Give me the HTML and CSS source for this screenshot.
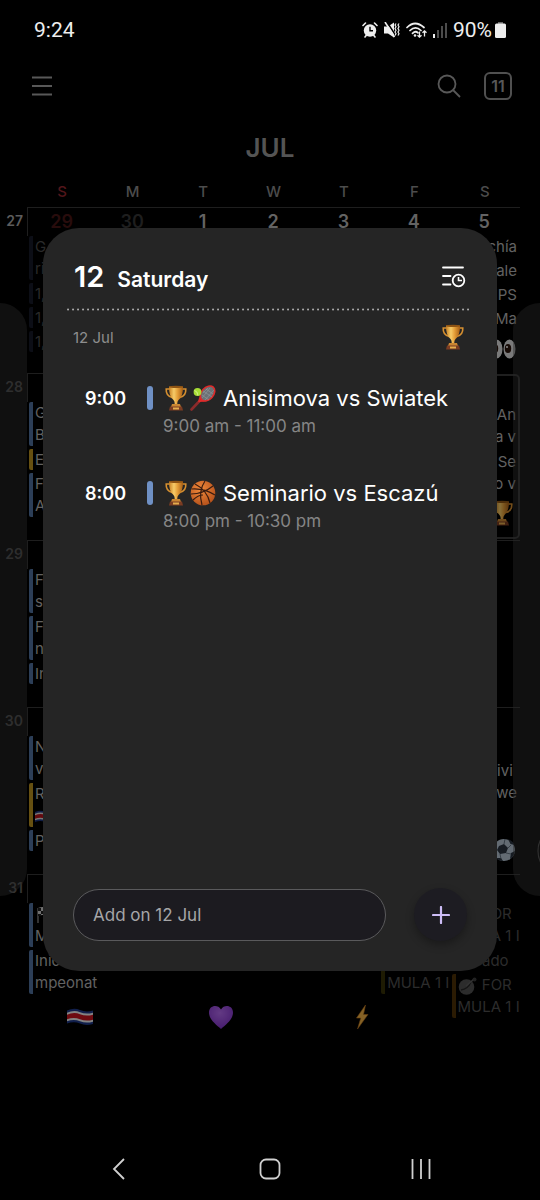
FILE: index.html
```html
<!DOCTYPE html>
<html lang="en">
<head>
<meta charset="utf-8">
<meta name="viewport" content="width=device-width, initial-scale=1">
<title>Calendar</title>
<link rel="stylesheet" href="styles.css">
</head>
<body>
<svg class="defs" aria-hidden="true">
  <defs>
    <linearGradient id="gold" x1="0" y1="0" x2="1" y2="0">
      <stop offset="0" stop-color="#c77f22"/><stop offset=".35" stop-color="#f6cb68"/><stop offset=".6" stop-color="#e5a03a"/><stop offset="1" stop-color="#a85e14"/>
    </linearGradient>
    <radialGradient id="orange" cx=".4" cy=".35" r=".7"><stop offset="0" stop-color="#f08a3c"/><stop offset="1" stop-color="#b4501a"/></radialGradient>
    <radialGradient id="purple" cx=".45" cy=".3" r=".8"><stop offset="0" stop-color="#b46af0"/><stop offset="1" stop-color="#7a2cc4"/></radialGradient>
    <symbol id="trophy" viewBox="0 0 24 26">
      <path d="M6 4H2.200q-.4 7 6 8.500M18 4h3.800q.4 7-6 8.500" fill="none" stroke="#d58f30" stroke-width="1.600"/>
      <path d="M5 1.500h14q.2 10-4.500 13.500-1.300 1-1.300 4.500h-2.400q0-3.500-1.300-4.500Q4.800 11.500 5 1.500z" fill="url(#gold)"/>
      <ellipse cx="12" cy="1.900" rx="7" ry="1.100" fill="#8f5413"/>
      <path d="M8 19h8l1 3H7z" fill="#c98532"/>
      <path d="M6 21.500h12l1 4H5z" fill="#7b3c22"/><path d="M9 22.500h6v2H9z" fill="#e4ac4c"/>
    </symbol>
    <symbol id="racket" viewBox="0 0 26 26">
      <path d="M1.500 24.500 10 15.500" stroke="#8b2b2b" stroke-width="2.600" stroke-linecap="round"/>
      <path d="M9 17q1-4 1.500-5M9.500 16q4 0 6-1" stroke="#dd2a2a" stroke-width="2" fill="none"/>
      <ellipse cx="17.500" cy="8.500" rx="8.500" ry="6" transform="rotate(-48 17.500 8.500)" fill="#6c7175" stroke="#e02b2b" stroke-width="1.600"/>
      <path d="m12 10 7 5M13 6l9 6M16 4l7 5M12 13 20 3M15 15 24 5M13 8l5-5" stroke="#9ba0a4" stroke-width=".5"/>
      <circle cx="7.500" cy="7" r="3.900" fill="#a7dc35"/><path d="M4.500 5.500q3 .5 3.500 5" stroke="#e5f6b0" stroke-width=".7" fill="none"/>
    </symbol>
    <symbol id="basketball" viewBox="0 0 26 26">
      <circle cx="13" cy="13" r="12.300" fill="url(#orange)"/>
      <path d="M1 14Q13 14 23 6M5 4q12 6 15 19M15 1Q8 11 12 25M1.500 9Q14 8 25 15M3 20q5-5 10-5" fill="none" stroke="#3a1c10" stroke-width="1.200"/>
    </symbol>
    <symbol id="eyes" viewBox="0 0 26 24">
      <ellipse cx="6.500" cy="12" rx="6" ry="9.500" fill="#dedede"/><ellipse cx="19.500" cy="12" rx="6" ry="9.500" fill="#dedede"/>
      <ellipse cx="5" cy="11.500" rx="3.200" ry="4.500" fill="#2b150c"/><ellipse cx="18" cy="11.500" rx="3.200" ry="4.500" fill="#2b150c"/>
      <circle cx="17" cy="10" r="1" fill="#fff"/>
    </symbol>
    <symbol id="soccer" viewBox="0 0 26 24">
      <circle cx="14" cy="12" r="11" fill="#b4c3d2"/>
      <path d="m9 8 5-2 4 4-2 5-6 1-3-4zM18 1q5 2 6.500 6l-4-1zM21 15l4-2q-1 6-5 8zM6 20l5 0 2 3q-5-.5-7-3z" fill="#2a3440"/>
      <path d="m14 6 1-5M18 10l3-3M16 15l5 1M10 16l1 5" stroke="#51606e" stroke-width=".8"/>
    </symbol>
    <symbol id="flag" viewBox="0 0 26 18">
      <path d="M0 2.500Q7-.5 13 2t13 .5V16q-7 2-13-.5T0 15.500z" fill="#1f3a8a"/>
      <path d="M0 4.700q7-3 13-.5t13 .5v9q-7 2-13-.5t-13 0z" fill="#eee"/>
      <path d="M0 6.700q7-3 13-.5t13 .5v5q-7 2-13-.5t-13 0z" fill="#c8141f"/>
    </symbol>
    <symbol id="heart" viewBox="0 0 26 26">
      <path d="M13 25C8 20.500 1 15.500 1 8.500 1 1 10 0 13 5.500 16 0 25 1 25 8.500 25 15.500 18 20.500 13 25z" fill="url(#purple)"/>
    </symbol>
    <symbol id="bolt" viewBox="0 0 26 26">
      <path d="M16.500 1 7.500 14h4.300L8.500 25 19 10.500h-4.500z" fill="#f3b345" stroke="#b9701d" stroke-width=".6"/>
    </symbol>
    <symbol id="dish" viewBox="0 0 20 18">
      <circle cx="8.500" cy="10" r="7.800" fill="#b0b0b0"/><path d="M3 13Q10 12 13 5" fill="none" stroke="#555" stroke-width="1.400"/><path d="m8 9 8-7" stroke="#ccc" stroke-width="1.400"/><circle cx="16.500" cy="2.500" r="2" fill="#888"/>
    </symbol>
    <symbol id="race" viewBox="0 0 20 18">
      <path d="M3 2v15" stroke="#aaa" stroke-width="1.200"/><path d="M3 2q5-2 8 0t7 0v8q-4 2-7 0t-8 0z" fill="#ddd"/>
      <path d="M3 2h3v3H3zM9 2h3v3H9zM6 5h3v3H6zM12 5h3v3h-3zM3 8h3v2H3zM9 8h3v2H9z" fill="#222"/>
    </symbol>
  </defs>
</svg>

<header class="status">
  <time>9:24</time>
  <div class="status-icons">
    <svg width="16" height="16" viewBox="0 0 16 16"><path d="M1 3.500 3.500 1M15 3.500 12.500 1M3 15l1.500-2M13 15l-1.500-2" stroke="#eee" stroke-width="1.600" stroke-linecap="round"/><circle cx="8" cy="8.500" r="6.200" fill="#eee"/><path d="M8 4.800v4h3" fill="none" stroke="#000" stroke-width="1.400"/></svg>
    <svg width="16" height="16" viewBox="0 0 16 16"><path d="M0 4.500h4L10 .5v15L4 11.500H0z" fill="#eee"/><path d="m3 0 9 14" stroke="#000" stroke-width="1.500"/><path d="m1 0 9.500 15" stroke="#eee" stroke-width="1.600"/><path d="m12 1.500-1 1.500 1 1.800-1 1.700 1 1.800-1 1.700 1 1.800-1 1.700M15 1.500 14 3l1 1.800-1 1.700 1 1.800-1 1.700 1 1.800-1 1.700" fill="none" stroke="#eee" stroke-width="1.200"/></svg>
    <svg class="wifi" width="21" height="17" viewBox="0 0 21 17"><path d="M1 5.500q8-8 17 0M4 8.500q5.500-5.500 11 0M6.500 11.300q3-2.800 5.500-.5" fill="none" stroke="#eee" stroke-width="1.700" stroke-linecap="round"/><circle cx="9" cy="13.500" r="1.300" fill="#eee"/><path d="M13.500 9.500V15m-2-1.800 2 2 2-2M18.500 14.500V9m-2 1.800 2-2 2 2" fill="none" stroke="#eee" stroke-width="1.300"/></svg>
    <svg width="14" height="16" viewBox="0 0 14 16"><path d="M0 12h2v4H0z" fill="#eee"/><path d="M4 8h2v8H4zM8 4h2v12H8zM12 1h2v15h-2z" fill="#4c4c4c"/></svg>
    <span class="battery">90%<svg width="11" height="16" viewBox="0 0 11 16"><path d="M3 0h5v2H3z" fill="#666"/><rect y="1.500" width="11" height="14.500" rx="1.500" fill="#eee"/></svg></span>
  </div>
</header>

<main class="app">
  <div class="toolbar">
    <button class="icon-btn" aria-label="Menu"><svg width="20" height="20" viewBox="0 0 20 20"><path d="M0 1.500h20M0 10h20M0 18.500h20" stroke="#585858" stroke-width="1.800"/></svg></button>
    <div class="tools">
      <button class="icon-btn" aria-label="Search"><svg width="24" height="24" viewBox="0 0 24 24"><circle cx="10" cy="10" r="8.500" fill="none" stroke="#585858" stroke-width="1.800"/><path d="m16 16 7 7" stroke="#585858" stroke-width="1.800"/></svg></button>
      <button class="today">11</button>
    </div>
  </div>
  <h1>JUL</h1>
  <div class="row weekdays"><span></span><span class="sun">S</span><span>M</span><span>T</span><span>W</span><span>T</span><span>F</span><span>S</span></div>

  <section class="row week">
    <span class="num current">27</span>
    <div class="day first past"><b class="date sun">29</b>
      <p class="ev two">G<br>ri</p><p class="ev">1,</p><p class="ev">1,</p><p class="ev">1,</p></div>
    <div class="day past"><b class="date">30</b></div>
    <div class="day"><b class="date">1</b></div>
    <div class="day"><b class="date">2</b></div>
    <div class="day"><b class="date">3</b></div>
    <div class="day"><b class="date">4</b></div>
    <div class="day end"><b class="date">5</b><p class="ev">chía</p><p class="ev">Vale</p><p class="ev">s PS</p><p class="ev">Ma</p><svg class="sticker"><use href="#eyes"/></svg></div>
  </section>
  <section class="row week">
    <span class="num">28</span>
    <div class="day first"><b class="date"></b><p class="ev two">G<br>B</p><p class="ev gold">E</p><p class="ev two">F<br>A</p></div>
    <div class="day"></div><div class="day"></div><div class="day"></div><div class="day"></div><div class="day"></div>
    <div class="day end selected"><b class="date"></b><p class="ev two">An<br>va v</p><p class="ev two">Se<br>io v</p><svg class="sticker"><use href="#trophy"/></svg></div>
  </section>
  <section class="row week">
    <span class="num">29</span>
    <div class="day first"><b class="date"></b><p class="ev two">F<br>se</p><p class="ev two">F<br>n</p><p class="ev">In</p></div>
    <div class="day"></div><div class="day"></div><div class="day"></div><div class="day"></div><div class="day"></div><div class="day"></div>
  </section>
  <section class="row week">
    <span class="num">30</span>
    <div class="day first"><b class="date"></b><p class="ev two">N<br>v</p><p class="ev two gold">R<br><svg class="mini"><use href="#flag"/></svg></p><p class="ev">P</p></div>
    <div class="day"></div><div class="day"></div><div class="day"></div><div class="day"></div><div class="day"></div>
    <div class="day end"><b class="date"></b><p class="ev"></p><p class="ev two">ivi&nbsp;<br>we</p><svg class="sticker"><use href="#soccer"/></svg></div>
  </section>
  <section class="row week">
    <span class="num">31</span>
    <div class="day first"><b class="date"></b><p class="ev two"><svg class="mini"><use href="#race"/></svg><br>M</p><p class="ev two">Inic<br>mpeonat</p><svg class="sticker"><use href="#flag"/></svg></div>
    <div class="day"></div>
    <div class="day"><svg class="sticker"><use href="#heart"/></svg></div>
    <div class="day"></div>
    <div class="day"><svg class="sticker"><use href="#bolt"/></svg></div>
    <div class="day next"><b class="date"></b><p class="ev two"></p><p class="ev two olive"><br>MULA 1 I</p></div>
    <div class="day next"><b class="date"></b><p class="ev two"><svg class="mini"><use href="#dish"/></svg> FOR<br>MULA 1 I</p><p class="ev right">ado&nbsp;&nbsp;</p><p class="ev two amber"><svg class="mini"><use href="#dish"/></svg> FOR<br>MULA 1 I</p></div>
  </section>

</main>

<div class="pager">
  <div class="peek left"></div>
  <section class="card" role="dialog" aria-labelledby="day-title">
    <header class="card-head">
      <h2 id="day-title"><span class="day-no">12</span>Saturday</h2>
      <button class="icon-btn" aria-label="Timeline"><svg width="24" height="26" viewBox="0 0 24 26"><path d="M1 1.500h20M1 10h7.500M1 18.500h7.500" stroke="#fff" stroke-width="1.800" stroke-linecap="round"/><circle cx="16.500" cy="14.500" r="5.800" fill="none" stroke="#fff" stroke-width="1.800"/><path d="M16.500 11v3.500H20" fill="none" stroke="#fff" stroke-width="1.600"/></svg></button>
    </header>
    <svg class="dots" width="100%" height="3" aria-hidden="true"><line x1="1" y1="1.500" x2="100%" y2="1.500" stroke="#a8a8a8" stroke-width="2" stroke-linecap="round" stroke-dasharray="0.100 4.900"/></svg>
    <div class="sub"><span>12 Jul</span><svg width="24" height="26"><use href="#trophy"/></svg></div>
    <ul class="events">
      <li><time>9:00</time><i class="bar"></i><div class="body"><h3><svg width="26" height="26"><use href="#trophy"/></svg><svg width="26" height="26"><use href="#racket"/></svg><span>Anisimova vs Swiatek</span></h3><p>9:00 am - 11:00 am</p></div></li>
      <li><time>8:00</time><i class="bar"></i><div class="body"><h3><svg width="26" height="26"><use href="#trophy"/></svg><svg width="26" height="26"><use href="#basketball"/></svg><span>Seminario vs Escazú</span></h3><p>8:00 pm - 10:30 pm</p></div></li>
    </ul>
    <form class="add">
      <input type="text" placeholder="Add on 12 Jul" aria-label="Add on 12 Jul">
      <button type="button" class="fab" aria-label="Add event"><svg width="18" height="18" viewBox="0 0 18 18"><path d="M9 1v16M1 9h16" stroke="#cdbdf6" stroke-width="2.200" stroke-linecap="round"/></svg></button>
    </form>
  </section>
  <div class="peek right"><svg width="3" height="26" viewBox="0 0 3 26"><path d="M4 1Q1 6 1 13t3 12" fill="none" stroke="#303030" stroke-width="1.200"/></svg></div>
</div>

<nav class="system">
  <button class="icon-btn" aria-label="Back"><svg width="24" height="24" viewBox="0 0 24 24"><path d="M17 2 7 12l10 10" fill="none" stroke="#d0d0d0" stroke-width="1.800"/></svg></button>
  <button class="icon-btn" aria-label="Home"><svg width="24" height="24" viewBox="0 0 24 24"><rect x="2.500" y="2.500" width="19" height="19" rx="5.500" fill="none" stroke="#d0d0d0" stroke-width="1.800"/></svg></button>
  <button class="icon-btn" aria-label="Recent apps"><svg width="24" height="24" viewBox="0 0 24 24"><path d="M3.500 2v20M12 2v20M20.500 2v20" stroke="#d0d0d0" stroke-width="1.800"/></svg></button>
</nav>
</body>
</html>
```
FILE: styles.css
```css
* { box-sizing: border-box; margin: 0; padding: 0; }
body {
  position: relative;
  display: flex;
  flex-direction: column;
  min-height: 100vh;
  background: #000;
  color: #fff;
  font-family: Inter, "Noto Sans", sans-serif;
  overflow-x: hidden;
}
button, input { font: inherit; color: inherit; background: none; border: 0; }
svg { display: block; }
.defs { position: absolute; width: 0; height: 0; }
.icon-btn { display: flex; }

.status {
  display: flex;
  justify-content: space-between;
  align-items: center;
  height: 60px;
  padding: 0 34px;
  font: 21px/24px Roboto, sans-serif;
  color: #eee;
}
.status-icons { display: flex; align-items: center; gap: 6px; }
.battery { display: flex; align-items: center; gap: 3px; }

.toolbar {
  display: flex;
  justify-content: space-between;
  align-items: center;
  height: 52px;
  padding: 0 28px 0 32px;
}
.tools { display: flex; align-items: center; gap: 23px; }
.today {
  width: 28px;
  height: 28px;
  border: 2px solid #505050;
  border-radius: 6px;
  color: #585858;
  font-size: 16px;
  font-weight: 600;
  line-height: 24px;
}
h1 {
  padding: 20px 0 13px;
  text-align: center;
  font-size: 26px;
  font-weight: 600;
  line-height: 32px;
  color: #545454;
}
.row {
  display: grid;
  grid-template-columns: 27px repeat(7, minmax(0, 1fr));
  padding-right: 20px;
}
.weekdays {
  height: 30px;
  text-align: center;
  font-size: 15px;
  font-weight: 500;
  line-height: 30px;
  color: #4c4c4c;
}
.weekdays .sun { color: #53161b; }

.week { min-height: 166px; }
.week + .week { min-height: 167px; }
.num {
  padding-right: 4px;
  text-align: right;
  font-size: 14px;
  font-weight: 600;
  line-height: 28px;
  color: #343434;
}
.num.current { color: #5c5c5c; }
.day {
  display: flex;
  flex-direction: column;
  gap: 3px;
  padding: 0 3px 8px 2px;
  border-top: 1px solid #1e1e1e;
}
.day.first { background: linear-gradient(#1e1e1e, #1e1e1e) 0 0 / 1px 28px no-repeat; }
.date {
  height: 25px;
  text-align: center;
  font-size: 18px;
  font-weight: 600;
  line-height: 28px;
  color: #636363;
}
.past .date { color: #1e1e1e; }
.past .date.sun { color: #280c0c; }
.ev {
  height: 21px;
  padding-left: 2px;
  border-left: 4px solid #2c3e57;
  border-radius: 2px;
  white-space: nowrap;
  font-size: 15px;
  font-weight: 400;
  line-height: 22px;
  color: #626262;
}
.ev.two { height: 44px; }
.past .ev { border-color: #0c0e16; color: #2a2a2a; }
.next .ev { color: #2c2c2c; border-color: #221703; }
.ev.gold { border-color: #665011; }
.next .ev.olive { border-color: #1e1b03; }
.next .ev.amber { border-color: #2b1b03; }
.end .ev, .ev.right { text-align: right; }
.selected { border: 2px solid #1f1f1f; border-radius: 5px; margin: 1px 0; padding-right: 2px; }
.mini { display: inline-block; width: 20px; height: 18px; vertical-align: middle; opacity: .5; }
.next .mini { opacity: .25; }
.sticker { width: 26px; height: 26px; margin: auto 1px 3px auto; opacity: .55; }

.pager {
  position: absolute;
  top: 228px;
  left: 0;
  right: 0;
  display: flex;
  gap: 16px;
}
.peek {
  flex: none;
  width: 27px;
  margin: 75px 0;
  background: rgba(38, 38, 38, .42);
}
.peek.left { border-radius: 0 28px 28px 0; }
.peek.right {
  display: flex;
  align-items: flex-end;
  justify-content: flex-end;
  padding-bottom: 32px;
  border-radius: 28px 0 0 28px;
}
.card {
  flex: 1;
  display: flex;
  flex-direction: column;
  min-height: 743px;
  padding: 31px 24px 30px;
  border-radius: 36px;
  background: #252525;
}
.card-head {
  display: flex;
  justify-content: space-between;
  align-items: center;
  padding: 0 7px;
}
h2 {
  display: flex;
  align-items: baseline;
  gap: 13px;
  font-size: 21px;
  font-weight: 600;
  line-height: 36px;
}
.day-no { font-size: 29px; }
.dots { margin-top: 10px; }
.sub {
  display: flex;
  justify-content: space-between;
  align-items: center;
  padding: 13px 8px 0 6px;
  font-size: 15px;
  color: #8e8e8e;
}
.events { flex: 1; padding: 31px 0 0 18px; list-style: none; }
.events li { display: flex; height: 95px; }
.events time { width: 62px; font-size: 18px; font-weight: 600; line-height: 36px; }
.bar { width: 6px; height: 24px; margin: 5px 10px 0 0; border-radius: 3px; background: #6f90c4; }
.body { flex: 1; min-width: 0; }
h3 {
  display: flex;
  align-items: center;
  gap: 1px;
  height: 34px;
  white-space: nowrap;
  font-size: 22px;
  font-weight: 400;
}
h3 span { padding-left: 6px; }
.body p { font-size: 17px; line-height: 22px; color: #858585; }
.add { display: flex; align-items: center; gap: 28px; padding: 0 6px; }
.add input {
  flex: 1;
  min-width: 0;
  height: 52px;
  padding: 0 19px;
  border: 1px solid #5a5a5c;
  border-radius: 26px;
  background: #1c1b20;
  font-size: 17px;
}
.add input::placeholder { color: #a6a6a8; opacity: 1; }
.fab {
  display: flex;
  align-items: center;
  justify-content: center;
  width: 53px;
  height: 53px;
  border-radius: 50%;
  background: #1d1c22;
  box-shadow: 0 4px 8px rgba(0, 0, 0, .3);
}

.system {
  display: flex;
  justify-content: space-between;
  margin-top: auto;
  padding: 0 107px 19px;
}
```
